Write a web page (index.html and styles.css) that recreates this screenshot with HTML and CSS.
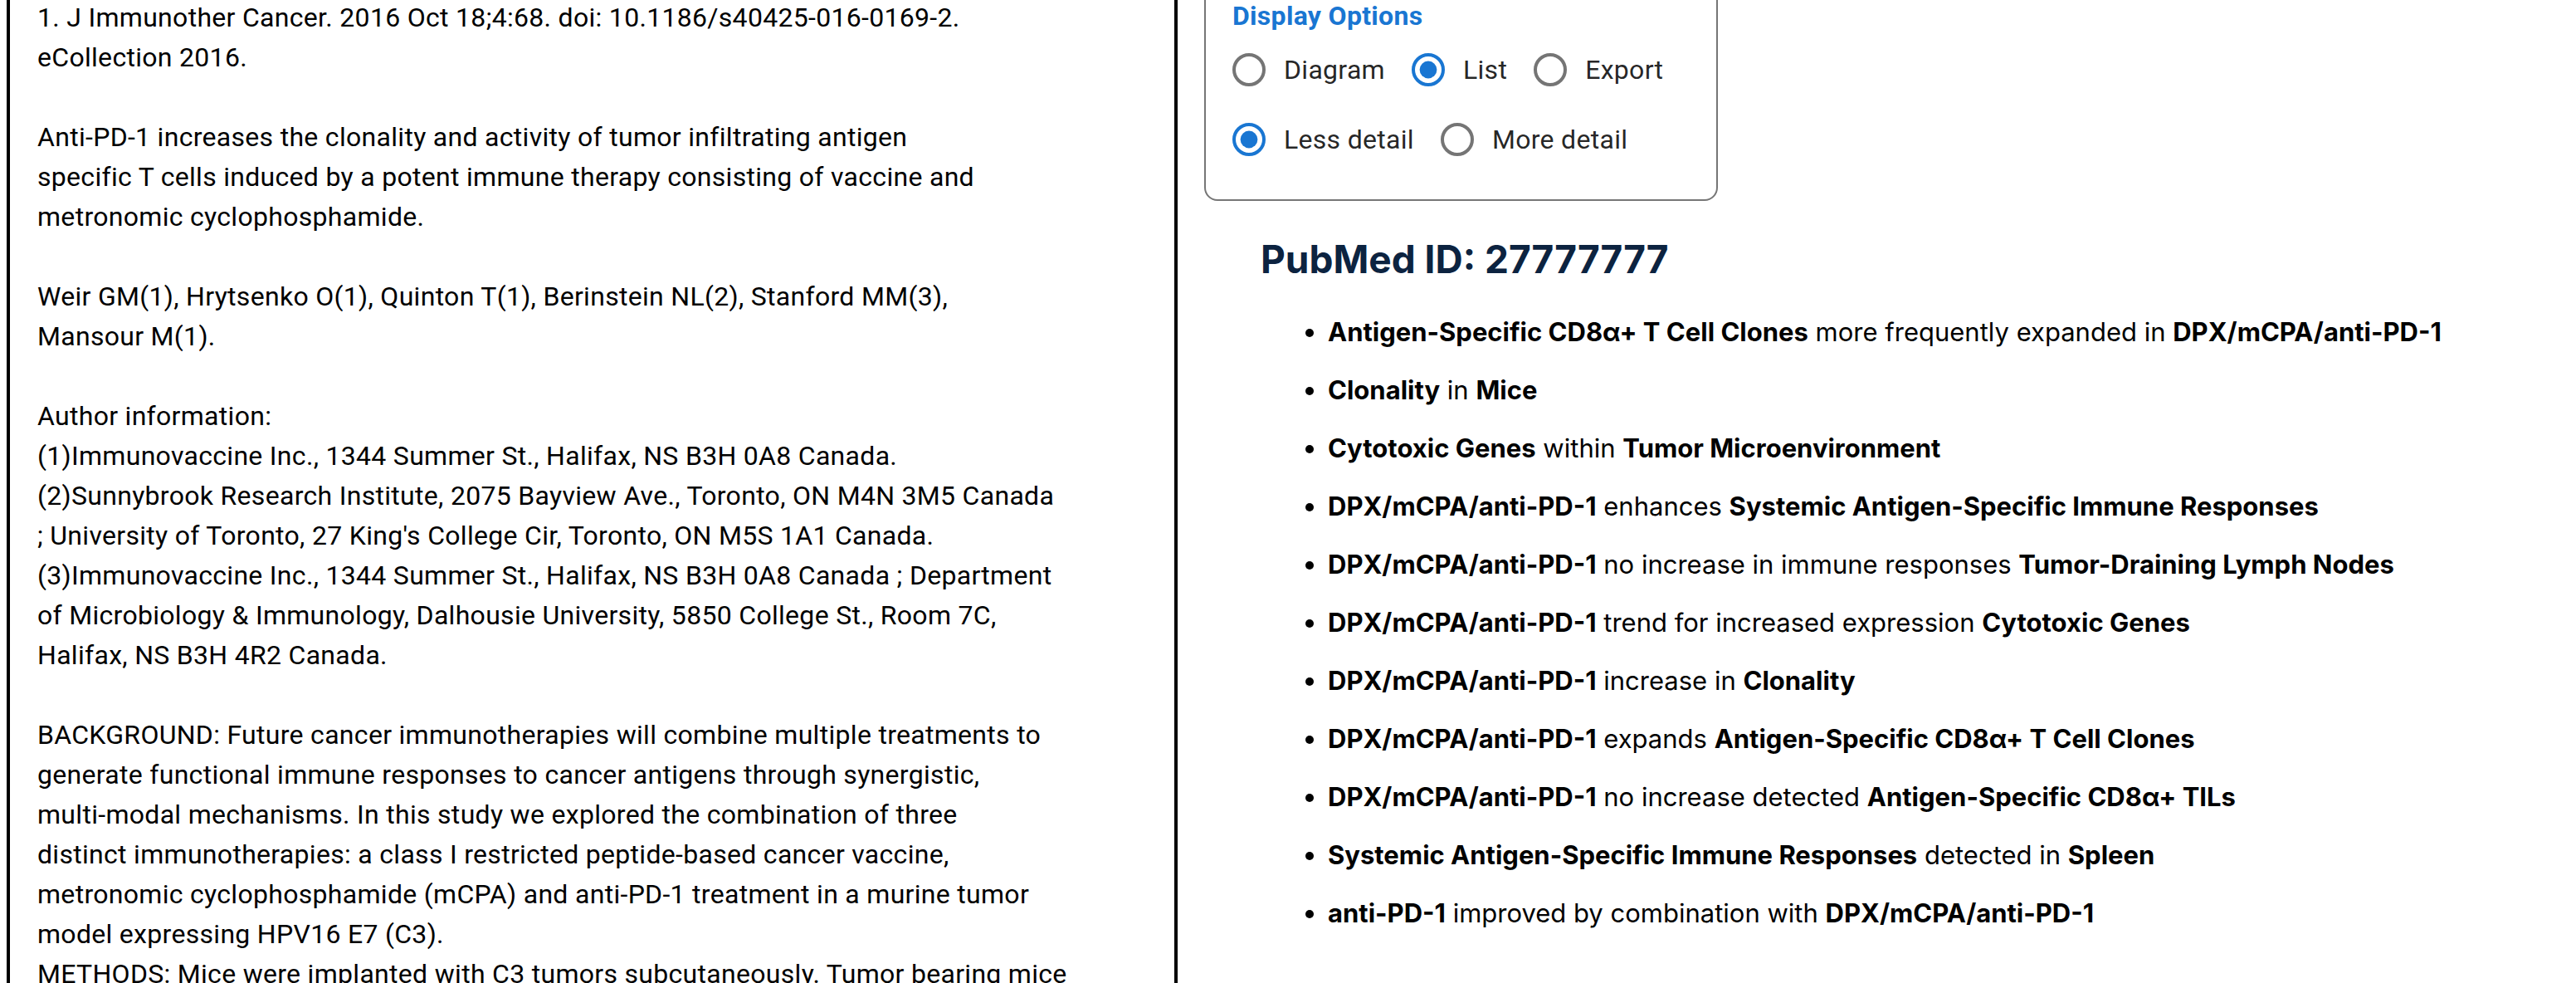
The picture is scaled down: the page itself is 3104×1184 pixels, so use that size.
FILE: index.html
```html
<!DOCTYPE html>
<html lang="en">
<head>
<meta charset="utf-8">
<title>PubMed abstract viewer</title>
<link rel="stylesheet" href="styles.css">
</head>
<body>
<div class="layout">
  <div class="abstract-pane">1. J Immunother Cancer. 2016 Oct 18;4:68. doi: 10.1186/s40425-016-0169-2.
eCollection 2016.

Anti-PD-1 increases the clonality and activity of tumor infiltrating antigen
specific T cells induced by a potent immune therapy consisting of vaccine and
metronomic cyclophosphamide.

Weir GM(1), Hrytsenko O(1), Quinton T(1), Berinstein NL(2), Stanford MM(3),
Mansour M(1).

Author information:
(1)Immunovaccine Inc., 1344 Summer St., Halifax, NS B3H 0A8 Canada.
(2)Sunnybrook Research Institute, 2075 Bayview Ave., Toronto, ON M4N 3M5 Canada
; University of Toronto, 27 King's College Cir, Toronto, ON M5S 1A1 Canada.
(3)Immunovaccine Inc., 1344 Summer St., Halifax, NS B3H 0A8 Canada ; Department
of Microbiology &amp; Immunology, Dalhousie University, 5850 College St., Room 7C,
Halifax, NS B3H 4R2 Canada.

BACKGROUND: Future cancer immunotherapies will combine multiple treatments to
generate functional immune responses to cancer antigens through synergistic,
multi-modal mechanisms. In this study we explored the combination of three
distinct immunotherapies: a class I restricted peptide-based cancer vaccine,
metronomic cyclophosphamide (mCPA) and anti-PD-1 treatment in a murine tumor
model expressing HPV16 E7 (C3).
METHODS: Mice were implanted with C3 tumors subcutaneously. Tumor bearing mice</div>

  <div class="side">
    <div class="options">
      <div class="options-title">Display Options</div>
      <div class="radio-row">
        <label class="choice">
          <span class="radio off"><svg viewBox="0 0 24 24"><circle cx="12" cy="12" r="9" fill="none" stroke="currentColor" stroke-width="2"/></svg></span>
          <span>Diagram</span>
        </label>
        <label class="choice">
          <span class="radio on"><svg viewBox="0 0 24 24"><circle cx="12" cy="12" r="9" fill="none" stroke="currentColor" stroke-width="2"/><circle cx="12" cy="12" r="5.2" fill="currentColor"/></svg></span>
          <span>List</span>
        </label>
        <label class="choice">
          <span class="radio off"><svg viewBox="0 0 24 24"><circle cx="12" cy="12" r="9" fill="none" stroke="currentColor" stroke-width="2"/></svg></span>
          <span>Export</span>
        </label>
      </div>
      <div class="radio-row">
        <label class="choice">
          <span class="radio on"><svg viewBox="0 0 24 24"><circle cx="12" cy="12" r="9" fill="none" stroke="currentColor" stroke-width="2"/><circle cx="12" cy="12" r="5.2" fill="currentColor"/></svg></span>
          <span>Less detail</span>
        </label>
        <label class="choice">
          <span class="radio off"><svg viewBox="0 0 24 24"><circle cx="12" cy="12" r="9" fill="none" stroke="currentColor" stroke-width="2"/></svg></span>
          <span>More detail</span>
        </label>
      </div>
    </div>

    <div class="results">
      <h2 class="pmid">PubMed ID: 27777777</h2>
      <ul class="relations">
        <li><b>Antigen-Specific CD8α+ T Cell Clones</b> more frequently expanded in <b>DPX/mCPA/anti-PD-1</b></li>
        <li><b>Clonality</b> in <b>Mice</b></li>
        <li><b>Cytotoxic Genes</b> within <b>Tumor Microenvironment</b></li>
        <li><b>DPX/mCPA/anti-PD-1</b> enhances <b>Systemic Antigen-Specific Immune Responses</b></li>
        <li><b>DPX/mCPA/anti-PD-1</b> no increase in immune responses <b>Tumor-Draining Lymph Nodes</b></li>
        <li><b>DPX/mCPA/anti-PD-1</b> trend for increased expression <b>Cytotoxic Genes</b></li>
        <li><b>DPX/mCPA/anti-PD-1</b> increase in <b>Clonality</b></li>
        <li><b>DPX/mCPA/anti-PD-1</b> expands <b>Antigen-Specific CD8α+ T Cell Clones</b></li>
        <li><b>DPX/mCPA/anti-PD-1</b> no increase detected <b>Antigen-Specific CD8α+ TILs</b></li>
        <li><b>Systemic Antigen-Specific Immune Responses</b> detected in <b>Spleen</b></li>
        <li><b>anti-PD-1</b> improved by combination with <b>DPX/mCPA/anti-PD-1</b></li>
      </ul>
    </div>
  </div>
</div>
</body>
</html>
```

FILE: styles.css
```css
html, body {
  background: #fff;
}

body {
  margin: 0;
  padding: 0 8px;
  font-family: Roboto, "Liberation Sans", sans-serif;
  overflow: hidden;
}

.layout {
  display: flex;
  align-items: flex-start;
  gap: 32px;
  margin-top: -40px;
}

.abstract-pane {
  flex: 0 0 1411px;
  box-sizing: border-box;
  border: 4px solid #000;
  padding: 33px 33px 120px;
  font-family: Roboto, sans-serif;
  font-size: 32px;
  line-height: 48px;
  letter-spacing: 0.00938em;
  color: #000;
  white-space: pre-line;
}

.side {
  display: flex;
  flex-direction: column;
  align-items: flex-start;
}

.options {
  border: 2px solid #767676;
  border-radius: 16px;
  padding: 34px 32px 30px;
}

.options-title {
  font-family: Roboto, sans-serif;
  font-weight: 700;
  font-size: 32px;
  line-height: 46px;
  letter-spacing: 0.00938em;
  color: #1976d2;
}

.radio-row {
  display: flex;
}

.choice {
  display: inline-flex;
  align-items: center;
  margin-left: -22px;
  margin-right: 32px;
  font-family: Roboto, sans-serif;
  font-size: 32px;
  line-height: 48px;
  letter-spacing: 0.00938em;
  color: rgba(0, 0, 0, 0.87);
}

.radio {
  width: 84px;
  height: 84px;
  display: flex;
  align-items: center;
  justify-content: center;
}

.radio svg {
  width: 48px;
  height: 48px;
  display: block;
}

.radio.off {
  color: #757575;
}

.radio.on {
  color: #1976d2;
}

.results {
  padding-left: 68px;
}

.pmid {
  margin: 43px 0 0;
  font-family: Inter, sans-serif;
  font-weight: 700;
  font-size: 46px;
  line-height: 55px;
  color: #0c2340;
}

.relations {
  margin: 39px 0 0;
  padding-left: 81px;
  font-family: Inter, sans-serif;
  font-size: 31px;
  line-height: 42px;
  color: #000;
}

.relations li {
  margin-bottom: 28px;
}

.relations b {
  font-weight: 700;
}
```
